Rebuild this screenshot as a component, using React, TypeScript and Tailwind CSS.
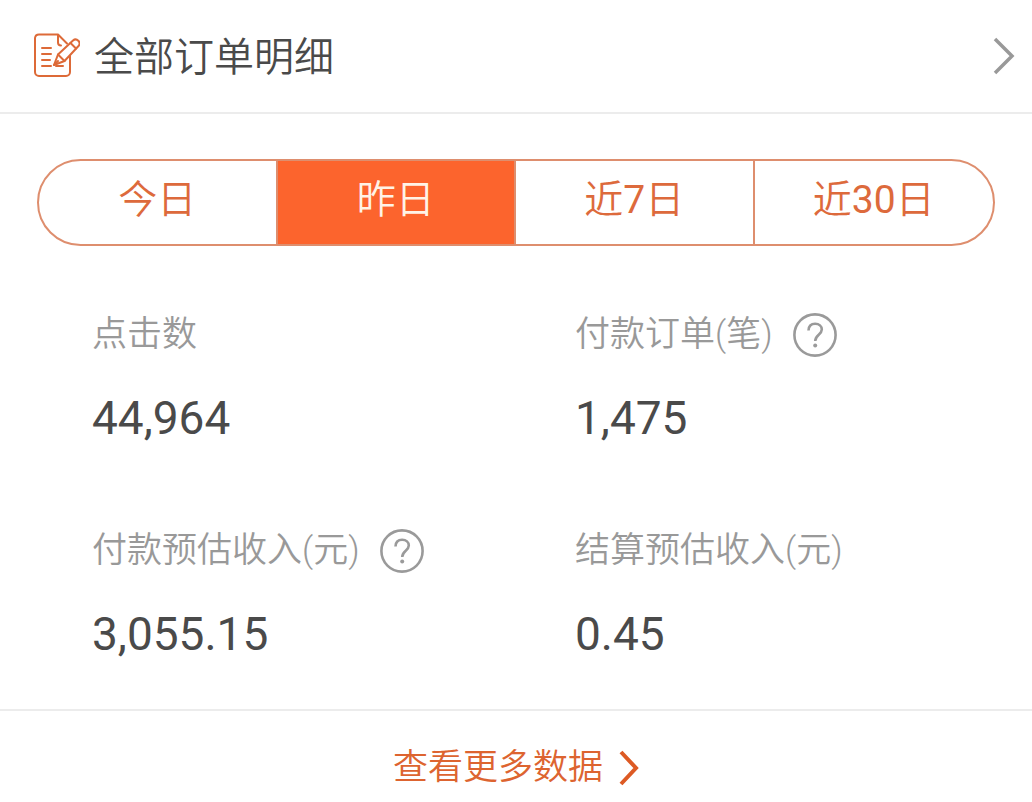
import React from "react";

type Metric = { label: string; value: string; help?: boolean };

const tabs = [
  { before: "今日" },
  { before: "昨日" },
  { before: "近", count: 7, after: "日" },
  { before: "近", count: 30, after: "日" },
];

const metrics: Metric[] = [
  { label: "点击数", value: "44,964" },
  { label: "付款订单(笔)", value: "1,475", help: true },
  { label: "付款预估收入(元)", value: "3,055.15", help: true },
  { label: "结算预估收入(元)", value: "0.45" },
];

function OrderIcon() {
  return (
    <svg className="h-12 w-12 shrink-0" viewBox="0 0 48 48" fill="none" stroke="#dd6a38" strokeWidth="2" strokeLinejoin="round" strokeLinecap="round" aria-hidden="true">
      <path d="M38 24v16a4 4 0 0 1-4 4H7a4 4 0 0 1-4-4V6a4 4 0 0 1 4-3.500h19l9 9" />
      <path d="M26 3v7.500a3 3 0 0 0 3 3" />
      <path d="M10 16h9M10 22h9M10 28h8M10 34h9M24 34h7" />
      <path d="M22 33l4-10.500L41 8.500a3.900 3.900 0 0 1 5.500 5.500L32.500 29z" fill="#fff" />
      <path d="M26 22.500l6.500 6.500M38.500 11l5.500 5.500M22 33l4-4" />
    </svg>
  );
}

function HelpIcon() {
  return (
    <svg className="h-11 w-11" viewBox="0 0 44 44" fill="none" stroke="#9a9a9a" strokeWidth="2.600" aria-hidden="true">
      <circle cx="22" cy="22" r="20.600" />
      <path d="M15.500 17.500c0-4.300 2.500-6.700 6.600-6.700s6.700 2.300 6.700 5.800c0 5-6.600 5.400-6.600 11.400" />
      <circle cx="22.200" cy="32.600" r="2" fill="#9a9a9a" stroke="none" />
    </svg>
  );
}

export default function App() {
  const [active, setActive] = React.useState(1);
  return (
    <main className="w-full bg-white font-['Roboto','Noto_Sans_CJK_SC',sans-serif] font-[350] text-[#4a4a4a]">
      <a href="#orders" className="flex h-[114px] items-center border-b-2 border-[#ececec] pr-4 pl-8">
        <OrderIcon />
        <span className="ml-3.5 flex-1 pt-1 text-[40px] leading-[56px]">全部订单明细</span>
        <svg className="h-10 w-6" viewBox="0 0 24 40" fill="none" stroke="#999" strokeWidth="3.500" aria-hidden="true">
          <path d="M3 3l17 17L3 37" />
        </svg>
      </a>
      <div className="mx-[37px] mt-[45px] grid h-[87px] grid-cols-4 overflow-hidden rounded-full border-2 border-[#de8e6e]">
        {tabs.map((t, i) => (
          <button
            key={i}
            type="button"
            aria-pressed={i === active}
            onClick={() => setActive(i)}
            className={"border-[#de8e6e] pb-1 text-[39px] not-last:border-r-2 " + (i === active ? "bg-[#fc642d] text-[#fff3e6]" : "text-[#dd6a3c]")}
          >
            {t.before}
            {t.count && <span className="font-normal">{t.count}</span>}
            {t.after}
          </button>
        ))}
      </div>
      <dl className="grid grid-cols-[483px_1fr] gap-y-[75px] pt-[61px] pb-[45px] pl-[92px]">
        {metrics.map((m) => (
          <div key={m.label}>
            <dt className="flex h-14 items-center gap-5 text-[35px] text-[#999]">
              {m.label}
              {m.help && (
                <button type="button" aria-label="说明">
                  <HelpIcon />
                </button>
              )}
            </dt>
            <dd className="mt-[25px] text-[46px] leading-[60px] font-normal">{m.value}</dd>
          </div>
        ))}
      </dl>
      <a href="#more" className="flex h-[92px] items-center justify-center gap-4 border-t-2 border-[#ececec] pt-6 text-[35px] text-[#dd6430]">
        查看更多数据
        <svg className="h-9 w-5" viewBox="0 0 20 36" fill="none" stroke="#dd5a24" strokeWidth="4" aria-hidden="true">
          <path d="M2 2l15 16L2 34" />
        </svg>
      </a>
    </main>
  );
}
